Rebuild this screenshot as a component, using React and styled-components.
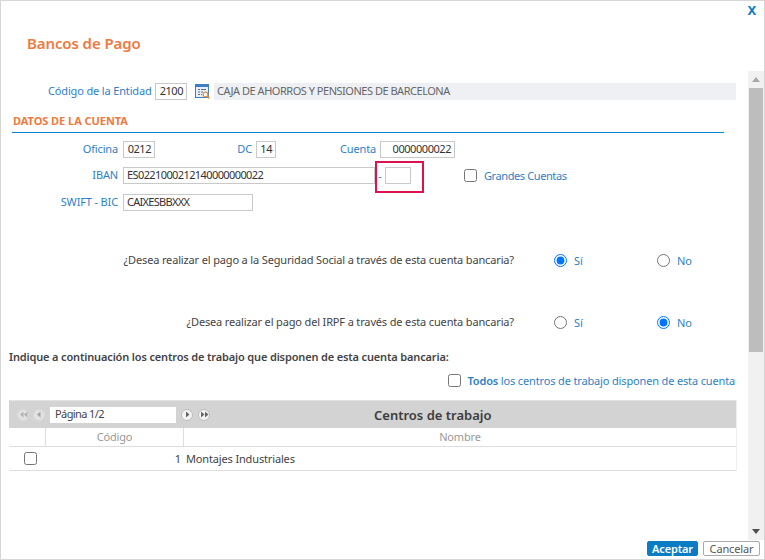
import React from 'react'
import styled, { createGlobalStyle } from 'styled-components'

const GlobalStyle = createGlobalStyle`
  html, body { margin: 0; padding: 0; background: #fff; }
  body { font-family: "Noto Sans", "Open Sans", sans-serif; font-size: 11px; letter-spacing: -0.15px; color: #444; }
`

const BLUE = '#2f7fc4'
const ORANGE = '#ee7a3f'

const Win = styled.div`
  box-sizing: border-box;
  width: 765px;
  height: 560px;
  border: 1px solid #d6d6d6;
  display: flex;
  flex-direction: column;
  position: relative;
`
const Head = styled.header`
  height: 70px;
  flex: none;
  position: relative;
`
const Close = styled.span`
  position: absolute;
  right: 8px;
  top: 0;
  font-size: 13px;
  font-weight: 700;
  color: #0a7cc4;
`
const Title = styled.h1`
  margin: 0;
  padding: 31px 0 0 26px;
  font-size: 15px;
  letter-spacing: -0.1px;
  line-height: 22px;
  font-weight: 600;
  color: ${ORANGE};
`
const Middle = styled.div`
  flex: none;
  height: 469px;
  display: flex;
`
const Content = styled.main`
  flex: 1;
  min-width: 0;
  padding-top: 12px;
`
const Row = styled.div`
  display: flex;
  align-items: center;
  height: 17px;
  margin-top: ${p => p.$mt || 0}px;
  padding-left: ${p => p.$pl || 0}px;
`
const Label = styled.label`
  color: ${BLUE};
  white-space: nowrap;
  text-align: right;
  flex: none;
  width: ${p => (p.$w ? `${p.$w}px` : 'auto')};
  margin-left: ${p => p.$ml || 0}px;
  margin-right: ${p => p.$mr ?? 4}px;
  padding-bottom: 2px;
`
const LinkLabel = styled(Label)`
  letter-spacing: -0.4px;
  padding-bottom: 0;
`
const Field = styled.div`
  box-sizing: border-box;
  flex: none;
  width: ${p => p.$w}px;
  height: 17px;
  line-height: 14px;
  border: 1px solid #c9c9c9;
  padding: 0 3px;
  color: #333;
  letter-spacing: ${p => p.$ls || -0.45}px;
  text-align: ${p => (p.$right ? 'right' : 'left')};
  white-space: nowrap;
`
const Description = styled.div`
  flex: none;
  box-sizing: border-box;
  width: 522px;
  height: 17px;
  line-height: 16px;
  margin-left: 4px;
  padding-left: 3px;
  letter-spacing: -0.48px;
  background: #eff0f3;
  color: #666;
`
const LookupIcon = styled.svg`
  flex: none;
  width: 15px;
  height: 16px;
  margin-left: 8px;
`
const Section = styled.h2`
  margin: 12px 0 0 11px;
  width: 712px;
  height: 21px;
  box-sizing: border-box;
  border-bottom: 1px solid #0a84cf;
  font-size: 11px;
  letter-spacing: -0.05px;
  line-height: 17px;
  font-weight: 700;
  color: ${ORANGE};
  padding-left: 1px;
`
const Annotated = styled.div`
  position: relative;
  display: flex;
  align-items: center;
  flex: none;
`
const Highlight = styled.div`
  position: absolute;
  left: 0px;
  top: -6px;
  width: 49px;
  height: 32px;
  box-sizing: border-box;
  border: 2px solid #dd1150;
`
const Dash = styled.span`
  color: ${BLUE};
  width: 10px;
  text-align: center;
  flex: none;
`
const Question = styled.div`
  width: 513px;
  flex: none;
  text-align: right;
  color: #444;
  white-space: nowrap;
  padding-bottom: 2px;
`
const Choice = styled.label`
  display: flex;
  align-items: center;
  gap: 7px;
  color: ${BLUE};
  flex: none;
  width: ${p => p.$w || 103}px;
`
const Radio = styled.input.attrs({ type: 'radio', readOnly: true })`
  margin: 0;
  width: 13px;
  height: 13px;
  flex: none;
`
const Check = styled.input.attrs({ type: 'checkbox', readOnly: true })`
  margin: 0;
  width: 13px;
  height: 13px;
  flex: none;
`
const Hint = styled.div`
  margin: 18px 0 0 8px;
  font-weight: 600;
  color: #444;
  line-height: 16px;
`
const AllRow = styled.div`
  display: flex;
  align-items: center;
  justify-content: flex-end;
  gap: 7px;
  width: 734px;
  height: 17px;
  margin-top: 7px;
  color: ${BLUE};
  b { font-weight: 600; }
`
const Grid = styled.section`
  width: 727px;
  margin: 11px 0 0 8px;
  border-right: 1px solid #eee;
`
const GridBar = styled.div`
  display: flex;
  align-items: center;
  height: 28px;
  box-sizing: border-box;
  border-top: 1px solid #e2e2e2;
  background: #d3d3d3;
`
const Pager = styled.div`
  display: flex;
  align-items: center;
  width: 365px;
  flex: none;
  padding-left: 8px;
  box-sizing: border-box;
`
const PageBtn = styled.span`
  width: 12px;
  height: 12px;
  margin-right: ${p => p.$mr || 5}px;
  border-radius: 50%;
  background: ${p => (p.$off ? '#e1e1e1' : '#f4f4f4')};
  border: 1px solid ${p => (p.$off ? '#dadada' : '#bcbcbc')};
  box-sizing: border-box;
  display: flex;
  align-items: center;
  justify-content: center;
  flex: none;
`
const PageInput = styled.div`
  box-sizing: border-box;
  width: 126px;
  height: 16px;
  line-height: 14px;
  background: #fff;
  padding-left: 5px;
  margin-right: 5px;
  letter-spacing: -0.6px;
  color: #444;
`
const GridTitle = styled.div`
  font-size: 13px;
  letter-spacing: 0;
  font-weight: 600;
  color: #3c3c3c;
`
const Cols = styled.div`
  display: grid;
  grid-template-columns: 36px 138px 1fr;
  height: ${p => p.$h}px;
  border-bottom: 1px solid #dedede;
  box-sizing: border-box;
  align-items: center;
`
const HeadCell = styled.div`
  height: 100%;
  line-height: 17px;
  text-align: center;
  color: #999;
  border-left: ${p => (p.$line ? '1px solid #dedede' : '0')};
`
const Cell = styled.div`
  color: #444;
  padding: ${p => (p.$right ? '0 2px 0 0' : '0 0 0 3px')};
  padding-left: ${p => (p.$check ? '15px' : undefined)};
  display: flex;
  justify-content: ${p => (p.$right ? 'flex-end' : 'flex-start')};
`
const Track = styled.div`
  flex: none;
  width: 16px;
  margin-left: 1px;
  background: #f1f1f1;
  display: flex;
  flex-direction: column;
  align-items: center;
`
const TrackEnd = styled.div`
  flex: none;
  height: 17px;
  display: flex;
  align-items: center;
  justify-content: center;
`
const Thumb = styled.div`
  flex: none;
  width: 14px;
  height: 264px;
  background: #bdbdbd;
`
const TrackRest = styled.div`
  flex: 1;
`
const Foot = styled.footer`
  flex: 1;
  display: flex;
  justify-content: flex-end;
  align-items: flex-start;
  gap: 5px;
  padding: 1px 4px 0 0;
`
const Btn = styled.button`
  box-sizing: border-box;
  height: 15px;
  padding: 0;
  width: ${p => p.$w}px;
  font: inherit;
  letter-spacing: inherit;
  line-height: 13px;
  border-radius: 2px;
  border: 1px solid ${p => (p.$primary ? '#0a7cc4' : '#aaa')};
  background: ${p => (p.$primary ? '#0a7cc4' : '#fff')};
  color: ${p => (p.$primary ? '#fff' : '#555')};
  font-weight: ${p => (p.$primary ? 600 : 400)};
`

const Arrow = ({ dir, color = '#888', double }) => (
  <svg width={double ? 9 : 7} height="7" viewBox={double ? '0 0 9 7' : '0 0 7 7'}>
    {dir === 'left' ? (
      <>
        <path d="M4.5 0.5v6L1 3.5z" fill={color} />
        {double && <path d="M8.5 0.5v6L5 3.5z" fill={color} />}
      </>
    ) : (
      <>
        <path d="M1 0.5v6l3.5-3z" fill={color} transform={double ? undefined : 'translate(1 0)'} />
        {double && <path d="M5 0.5v6l3.5-3z" fill={color} />}
      </>
    )}
  </svg>
)

export default function App() {
  return (
    <Win>
      <GlobalStyle />
      <Head>
        <Close>X</Close>
        <Title>Bancos de Pago</Title>
      </Head>
      <Middle>
        <Content>
          <Row $pl={47}>
            <Label $w={103}>Código de la Entidad</Label>
            <Field $w={32} $right>2100</Field>
            <LookupIcon viewBox="0 0 15 16">
              <rect x="0.5" y="0.5" width="13" height="13" fill="#e6eef8" stroke="#3f7fbf" />
              <rect x="0" y="0" width="14" height="3" fill="#3f7fbf" />
              <path d="M3 5.5h2M6 5.5h5M3 8h2M6 8h2M3 10.5h2M6 10.5h1" stroke="#5b6f88" />
              <circle cx="10.5" cy="10.5" r="2.4" fill="#fff" stroke="#e88a3c" strokeWidth="1.2" />
              <path d="M12.2 12.2l2.3 2.3" stroke="#e88a3c" strokeWidth="1.5" />
            </LookupIcon>
            <Description>CAJA DE AHORROS Y PENSIONES DE BARCELONA</Description>
          </Row>

          <Section>DATOS DE LA CUENTA</Section>

          <Row $mt={8}>
            <Label $w={117} $mr={5}>Oficina</Label>
            <Field $w={32} $right>0212</Field>
            <Label $w={97}>DC</Label>
            <Field $w={20} $right>14</Field>
            <Label $w={100}>Cuenta</Label>
            <Field $w={75} $right>0000000022</Field>
          </Row>

          <Row $mt={9}>
            <Label $w={117} $mr={5}>IBAN</Label>
            <Field $w={252} $ls={-0.6}>ES0221000212140000000022</Field>
            <Annotated>
              <Highlight />
              <Dash>-</Dash>
              <Field $w={26} />
            </Annotated>
            <Check style={{ marginLeft: 53 }} />
            <LinkLabel $ml={7}>Grandes Cuentas</LinkLabel>
          </Row>

          <Row $mt={10}>
            <Label $w={117} $mr={5}>SWIFT - BIC</Label>
            <Field $w={130} $ls={-0.7}>CAIXESBBXXX</Field>
          </Row>

          <Row $mt={41}>
            <Question>¿Desea realizar el pago a la Seguridad Social a través de esta cuenta bancaria?</Question>
            <Choice style={{ marginLeft: 40 }}><Radio name="ss" defaultChecked />Sí</Choice>
            <Choice><Radio name="ss" />No</Choice>
          </Row>

          <Row $mt={45}>
            <Question>¿Desea realizar el pago del IRPF a través de esta cuenta bancaria?</Question>
            <Choice style={{ marginLeft: 40 }}><Radio name="irpf" />Sí</Choice>
            <Choice><Radio name="irpf" defaultChecked />No</Choice>
          </Row>

          <Hint>Indique a continuación los centros de trabajo que disponen de esta cuenta bancaria:</Hint>

          <AllRow>
            <Check />
            <span><b>Todos</b> los centros de trabajo disponen de esta cuenta</span>
          </AllRow>

          <Grid>
            <GridBar>
              <Pager>
                <PageBtn $off $mr={4}><Arrow dir="left" double color="#b4b4b4" /></PageBtn>
                <PageBtn $off><Arrow dir="left" color="#a4a4a4" /></PageBtn>
                <PageInput>Página 1/2</PageInput>
                <PageBtn><Arrow dir="right" color="#666" /></PageBtn>
                <PageBtn><Arrow dir="right" double color="#666" /></PageBtn>
              </Pager>
              <GridTitle>Centros de trabajo</GridTitle>
            </GridBar>
            <Cols $h={19}>
              <HeadCell />
              <HeadCell $line>Código</HeadCell>
              <HeadCell $line>Nombre</HeadCell>
            </Cols>
            <Cols $h={24}>
              <Cell $check><Check /></Cell>
              <Cell $right>1</Cell>
              <Cell>Montajes Industriales</Cell>
            </Cols>
          </Grid>
        </Content>
        <Track>
          <TrackEnd><svg width="8" height="5"><path d="M4 0l4 5H0z" fill="#a8a8a8" /></svg></TrackEnd>
          <Thumb />
          <TrackRest />
          <TrackEnd><svg width="8" height="5"><path d="M0 0h8L4 5z" fill="#505050" /></svg></TrackEnd>
        </Track>
      </Middle>
      <Foot>
        <Btn $primary $w={51}>Aceptar</Btn>
        <Btn $w={57}>Cancelar</Btn>
      </Foot>
    </Win>
  )
}
